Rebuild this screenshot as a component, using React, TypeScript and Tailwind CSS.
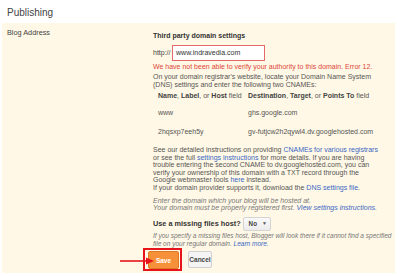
export default function App() {
  return (
    <div className="relative h-[276px] w-[400px] overflow-hidden bg-white font-['Liberation_Sans',Arial,sans-serif] text-[7px] leading-[7.6px] text-[#555]">
      <h2 className="pl-[7px] pt-[6px] text-[10px] leading-[13px] text-[#444]">Publishing</h2>

      <div className="ml-[2px] mt-[4px] flex h-[250px] w-[393px] bg-[#fff8e6]">
        <div className="w-[151px] shrink-0 pl-[5px] pt-[6px] text-[7.3px] text-[#444]">Blog Address</div>

        <div className="flex-1 whitespace-nowrap pt-[9px]">
          <div className="font-bold text-[#333]">Third party domain settings</div>

          <div className="mt-[5px] flex h-[16px] items-center">
            <span className="text-[#444]">http://</span>
            <div className="ml-[1.5px] flex h-[16px] w-[93px] items-center border border-[#e36a6a] bg-white pl-[3px] text-[#333]">
              www.indravedia.com
            </div>
          </div>

          <p className="mt-[2px] text-[#e0453a]">
            We have not been able to verify your authority to this domain. Error 12.
          </p>

          <p className="mt-[3px]">
            On your domain registrar's website, locate your Domain Name System
            <br />
            (DNS) settings and enter the following two CNAMEs:
          </p>

          <div className="grid grid-cols-[90px_auto] pl-[5px]">
            <div className="mt-[3.5px]">
              <b className="text-[#444]">Name</b>, <b className="text-[#444]">Label</b>, or{" "}
              <b className="text-[#444]">Host</b> field
            </div>
            <div className="mt-[3.5px]">
              <b className="text-[#444]">Destination</b>, <b className="text-[#444]">Target</b>, or{" "}
              <b className="text-[#444]">Points To</b> field
            </div>
            <div className="mt-[9.5px]">www</div>
            <div className="mt-[9.5px]">ghs.google.com</div>
            <div className="mt-[11.5px]">2hqsxp7eeh5y</div>
            <div className="mt-[11.5px]">gv-futjcw2h2qywl4.dv.googlehosted.com</div>
          </div>

          <p className="mt-[10.5px] leading-[7.5px]">
            See our detailed instructions on providing{" "}
            <span className="text-[#3b66c4]">CNAMEs for various registrars</span>
            <br />
            or see the full <span className="text-[#3b66c4]">settings instructions</span> for more details. If you are having
            <br />
            trouble entering the second CNAME to dv.googlehosted.com, you can
            <br />
            verify your ownership of this domain with a TXT record through the
            <br />
            Google webmaster tools <span className="text-[#3b66c4]">here</span> instead.
            <br />
            If your domain provider supports it, download the{" "}
            <span className="text-[#3b66c4]">DNS settings file</span>.
          </p>

          <p className="mt-[5.5px] italic leading-[7.3px] text-[#777]">
            Enter the domain which your blog will be hosted at.
            <br />
            Your domain must be properly registered first.{" "}
            <span className="text-[#3b66c4]">View settings instructions.</span>
          </p>

          <div className="mt-[5.5px] flex h-[14.5px] items-center">
            <span className="text-[7.3px] font-bold text-[#333]">Use a missing files host?</span>
            <div className="ml-[2px] flex h-[14.5px] w-[28px] items-center rounded-[2px] border border-[#d4d4d4] bg-gradient-to-b from-[#fafafa] to-[#ececec] pl-[5px] text-[6.3px] font-bold text-[#444]">
              No
              <span className="ml-[5px] text-[5px] text-[#555]">▼</span>
            </div>
          </div>

          <p className="mt-[1px] text-[6.5px] italic leading-[7.6px] text-[#777]">
            If you specify a missing files host, Blogger will look there if it cannot find a specified
            <br />
            file on your regular domain. <span className="text-[#3b66c4]">Learn more.</span>
          </p>

          <div className="-ml-[10px] mt-[1px] flex items-start">
            <div className="border-2 border-[#e8141b] pb-0 pl-[3px] pr-[1px] pt-[1px]">
              <button className="flex h-[18px] w-[31px] items-center justify-center rounded-[2px] border border-[#e07a22] bg-[#f6913a] text-[6.5px] font-bold text-white">
                Save
              </button>
            </div>
            <button className="ml-[6px] mt-[3px] flex h-[17px] w-[24px] items-center justify-center rounded-[2px] border border-[#d0d0d0] bg-[#f4f4f4] text-[6.5px] font-bold text-[#444]">
              Cancel
            </button>
          </div>
        </div>
      </div>

      {/* red annotation arrow */}
      <svg className="absolute left-[118px] top-[256px]" width="38" height="10" viewBox="0 0 38 10">
        <line x1="2" y1="5" x2="30" y2="5" stroke="#e8141b" strokeWidth="1.6" />
        <polygon points="28,1.5 36,5 28,8.5" fill="#e8141b" />
      </svg>
    </div>
  );
}
